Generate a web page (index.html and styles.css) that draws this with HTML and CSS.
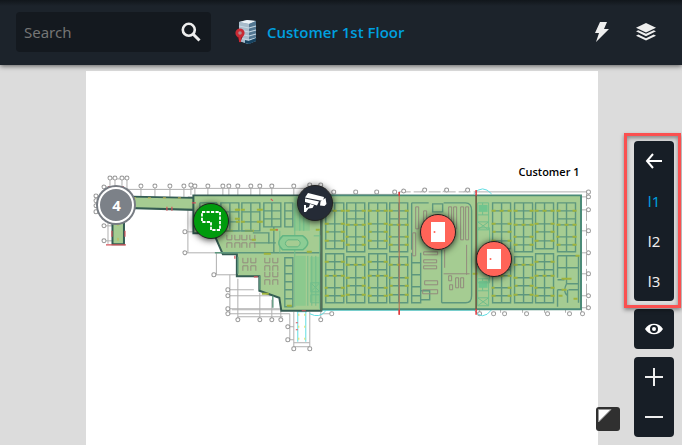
FILE: index.html
```html
<!DOCTYPE html>
<html lang="en">
<head>
<meta charset="utf-8">
<meta name="viewport" content="width=device-width, initial-scale=1">
<title>Customer 1st Floor</title>
<link rel="stylesheet" href="styles.css">
</head>
<body>
<header class="topbar">
  <form class="search" role="search">
    <input class="search-input" type="search" placeholder="Search" aria-label="Search">
    <button class="icon-button" type="button" aria-label="Run search">
      <svg width="20" height="20" viewBox="0 0 20 20" fill="none" stroke="#eee"><circle cx="7.800" cy="7.800" r="6" stroke-width="2.600"/><path d="M12 12l6.500 6.500" stroke-width="3"/></svg>
    </button>
  </form>
  <h1 class="title">
    <svg width="22" height="26" viewBox="0 0 22 26">
      <path d="M4 3l8-2 9 1v20l-8 3-9-3z" fill="#7794aa"/>
      <path d="M4 3l8-2 9 1-7 3z" fill="#edf3f7"/>
      <path d="M4 3l10 2v20l-10-3z" fill="#a9bccb"/>
      <path d="M14 5l7-3v20l-7 3z" fill="#527691"/>
      <path d="M4 7l10 2 7-2M4 11l10 2 7-2M4 15l10 2 7-2M4 19l10 2 7-2" fill="none" stroke="#c6d8e4" stroke-width="1.200"/>
      <path d="M10 21l4 1 7-3v3l-7 3-4-1z" fill="#16425f"/>
      <path d="M5 24l-3-7h6z" fill="#8e1620"/>
      <circle cx="5" cy="14" r="3.200" fill="#b08a8c" stroke="#c92a34" stroke-width="2.800"/>
      <path d="M5 17v6" stroke="#c92a34" stroke-width="2"/>
    </svg>
    <span>Customer 1st Floor</span>
  </h1>
  <nav class="actions" aria-label="Tools">
    <button class="icon-button" type="button" aria-label="Actions">
      <svg width="20" height="22" viewBox="0 0 20 22"><path d="M8 1h7l-3 7h5L4 21l3-9H3z" fill="#eee"/></svg>
    </button>
    <button class="icon-button" type="button" aria-label="Layers">
      <svg width="20" height="20" viewBox="0 0 20 20" fill="#eee"><path d="M10 1l10 4.700-10 4.800L0 5.700z"/><path d="M0 9.300l2.300-1.100 7.700 3.600 7.700-3.600L20 9.300l-10 4.900z"/><path d="M0 13.700l2.300-1.100 7.700 3.600 7.700-3.600 2.300 1.100-10 4.900z"/></svg>
    </button>
  </nav>
</header>

<main class="stage">
  <section class="sheet" aria-label="Floor plan">
    <svg class="plan" viewBox="86 71 512 374" fill="none">
      <defs>
        <g id="desks-a">
          <path class="desk" d="M0 0h18v46H0zM9 0v46M0 8h18M0 21h18M0 29h18M0 38h18"/>
          <path class="chair" d="M-1 8h4M15 8h4M7 8h4M-1 21h4M15 21h4M0 29h3M15 29h4M-1 38h4M15 38h4"/>
        </g>
        <g id="desks-b">
          <path class="desk" d="M0 0h18v49H0zM9 0v49M0 8h18M0 16h18M0 22h18M0 34h18M0 42h18"/>
          <path class="chair" d="M-1 8h4M15 8h4M-1 22h4M15 22h4M7 22h4M-1 34h3M15 34h4M-1 42h4M15 42h4"/>
        </g>
        <g id="room">
          <path class="desk" d="M0 0h18v28H0zM9 0v28M0 9h18M0 19h18"/>
          <path class="chair" d="M-1 7h4M15 7h4M-1 19h4M15 19h4M3 28h9"/>
        </g>
        <path id="seats" class="seat" d="M0 0v5h5V0M8 0v5h5V0M0 13v-5h5v5M8 13v-5h5v5"/>
        <g id="stair"><path class="core" d="M0 0h11v27H0zM0 12h11M0 19l11 8M11 19L0 27M0 19h11M5 0v12"/><path d="M1 2h9v7H1z" fill="#70c58e"/></g>
        <path id="axis-ends" d="M110 178h0M115 178h0M122 178h0M127 178h0M104 187h0M96 196h0M96 201h0M96 206h0M96 212h0M141 186h0M155 186h0M170 186h0M184 186h0M191 185h0M104 226h0M104 241h0M185 232h0M185 253h0M195 186h0M208 186h0M223 186h0M229 186h0M238 186h0M251 186h0M260 186h0M272 186h0M294 186h0M310 185h0M321 185h0M334 192h0M356 192h0M377 192h0M395 192h0M404 191h0M425 190h0M447 190h0M468 190h0M214 275h0M228 290h0M228 296h0M228 309h0M228 314h0M238 320h0M260 320h0M272 320h0M281 320h0M288 327h0M288 340h0M294 349h0M310 349h0M321 320h0M332 314h0M589 192h0M589 197h0M589 210h0M589 231h0M589 253h0M589 274h0M589 296h0M589 308h0M480 314h0M494 314h0M505 314h0M527 314h0M548 314h0M570 314h0M583 314h0"/>
      </defs>

      <path class="grid" d="M110 179h17M110 179v14M115 179v14M122 179v14M127 179v14M104 187h11M96 196h10M96 201h10M96 206h10M96 212h10M127 189.500h66M141 187v10M155 187v10M170 187v10M184 187v10M191 186v9M104 226h9M104 241h9M108 218v26M188 197v56M185 232h9M185 253h38M188 197h6"/>
      <path class="grid" d="M191 188.500h124M195 186v10M208 186v10M223 186v10M229 186v10M238 186v10M251 186v10M260 186v10M272 186v10M294 186v10M310 185v10M322 187v7M322 194.500h78M334 191v4M356 191v4M377 191v4M395 191v4"/>
      <path class="grid" d="M214 275h23M216.500 253v22M230 275v40M228 290h26M228 296h43M228 309h54M228 314h62M232 310h50M238 279v41M260 293v27M272 300v20M281 311v9M238 317h45M290 314v26M294 312v37M310 312v37M287 327h7M287 340h7M294 343h16M294 347h16M321 312v8M322 314h9"/>
      <path class="grid dashed" d="M399 192h80M587 194v116"/>
      <path class="grid" d="M479 192h109M582 197h7M582 210h7M582 231h7M582 253h7M582 274h7M582 296h7M582 308h7M421 192l3-2M443 192l3-2M464 192l3-2M480 309v4M501 309v4M523 309v4M545 309v4M566 309v4M582 309v4"/>
      <use class="nodes" href="#axis-ends"/>
      <use class="hole" href="#axis-ends"/>
      <path class="cyan" d="M298 312v30M306 312v30M297 312h10M310 314q10 5 16-3M474 194q9-10 18 0M474 310q9 12 18 0M321 310.500h154"/>
      <path d="M299 314v27M305 314v27" stroke="#e4e05c" stroke-dasharray="2 10"/>

      <path class="wing" d="M112.500 205v39.500h11.500V208z"/>
      <path class="wing" d="M120 196.500l74 1.500v12l-74-2z"/>
      <path class="hall" d="M321.500 195.500H581.500V309.500H321.500z"/>
      <path class="wing" d="M193.500 195.500h128V311h-40l-2-13-20-7v-14.500h-22.500v-22h-14l-7-16-6-5h-16.500z"/>

      <path class="glass" d="M294 197h16v34h-16zM296 256h10v50h-10zM310 257h10v45h-10z"/>
      <use href="#room" x="221" y="203"/><use href="#room" x="242" y="203"/>
      <path class="desk" d="M264 203h17v24h-17zM272 203v24M264 211h17M264 219h17M285 203h8v24h-8zM285 211h8M285 219h8M200 203h17M200 203v8M217 203v20M222 231h31M253 233h16v11M253 253h68M254 243h22M274 227v26M285 258h8v49h-8zM285 266h8M285 274h8M285 282h8M285 290h8M285 299h8M215 253h106M238 257v17M260 276v14M273 296v12"/>
      <path class="core" d="M295 203v104M300 203v28M304 203v28M308 256v50M312 256v50M316 256v50M320 231v78M311 283h9v9h-9zM311 283l9 9M320 283l-9 9M311 295h9v8h-9zM314 236h7v16M280 231v22"/>
      <path d="M283 236q-8 7 0 14h20q10-7 0-14z" fill="#8ccd94" stroke="#63b583" stroke-width="1.500"/>
      <path d="M288 240q-5 4 0 7h10q5-4 0-7z" fill="#a5cc92" stroke="#63b583"/>
      <use href="#seats" x="227" y="235"/><use href="#seats" x="242" y="235"/><use href="#seats" x="243" y="258"/><use href="#seats" x="265" y="258"/><use href="#seats" x="265" y="272"/>
      <path class="chair" d="M235 210h5M235 219h5M259 210h4M259 222h4M270 230h8M252 240h4M264 254h7M287 306h5M307 252h5M316 230h4M262 294h7M206 205h3"/>

      <use href="#desks-a" x="326" y="203"/><use href="#desks-b" x="326" y="254"/>
      <use href="#desks-b" x="347" y="203"/><use href="#desks-a" x="347" y="257"/>
      <use href="#desks-a" x="369" y="203"/><use href="#desks-b" x="369" y="254"/>
      <use href="#desks-b" x="390" y="203"/><use href="#desks-a" x="390" y="257"/>
      <path class="desk" d="M412 203h17M412 203v47M412 253v50h9V253M412 263h9M412 275h9M412 287h9M412 296h9M433 204h10v8h-10zM421 291h9v9h-9zM442 250v53M444 203h22q6 0 6 8v85q0 7-6 7h-24"/>
      <path class="seat" d="M416 207v22h3v-22zM424 211v25h3v-25zM449 207v13h3v-13zM454 207v22h3v-22zM461 207v33h3v-33zM466 207v33h3v-33zM413 233h3v23h-3zM445 250v18M424 252h14v3h-14zM424 260h13v3h-13zM424 266h13v3h-13zM425 281h13v4h-13zM423 290h15v4h-15zM444 274h26M449 276h3v5h-3zM456 278h3v10h-3zM461 278h3v10h-3zM450 285h3v5h-3zM467 245v30"/>
      <use href="#stair" x="478" y="203"/><use href="#stair" x="478" y="279"/>
      <path class="core" d="M478 228h12v55h-12z"/>
      <use href="#desks-a" x="493" y="203"/><use href="#desks-b" x="493" y="254"/>
      <use href="#desks-b" x="515" y="203"/><use href="#desks-a" x="515" y="257"/>
      <use href="#desks-a" x="536" y="203"/><use href="#desks-b" x="536" y="254"/>
      <use href="#desks-b" x="558" y="203"/>
      <path class="desk" d="M558 256h21v47M558 256v22M558 268h21M567 256v28M558 280h7M558 290h6M567 284h12M569 290h10M558 290v17M568 290v13M567 284q-4 8 1 12"/>
      <path class="chair" d="M562 279h10M562 290h5M559 296h4M576 256h4M574 299h4M473 274h5"/>
      <path d="M118 198h72M118 208v34" stroke="#c9b84c" stroke-dasharray="3 12"/>
      <path d="M108 187h16M106 245h20M112 231v6M125 231v6M167 207v4M172 207v4M192 203h4M235 256v3M254 277h4M296 323h2M296 330h2M271 199l2 2M276 230h2M302 311h4" stroke="#d4535a" stroke-width="1.200"/>
      <path d="M399.500 192v123" stroke="#b86a50"/><path d="M399.500 192v4M399.500 310v5M476.500 190v6M476.500 309v6" stroke="#e4343c" stroke-width="1.500"/>
      <path d="M476.500 196v113" stroke="#66503c" stroke-width="1.500"/>
      <path d="M321.500 196v115" stroke="#55705a" stroke-width="2"/>
      <text class="plan-label" x="519" y="176">Customer 1</text>
    </svg>
    <button class="marker cluster" type="button" aria-label="4 items">4</button>
    <button class="marker zone" type="button" aria-label="Zone">
      <svg width="22" height="22" viewBox="0 0 22 22" fill="none" stroke="#fff" stroke-width="1.800"><path d="M2 2h18v18h-9v-8H2z" stroke-dasharray="3.200 1.300"/></svg>
    </button>
    <button class="marker camera" type="button" aria-label="Camera">
      <svg width="26" height="24" viewBox="0 0 26 24" fill="#fff"><path d="M6 2l16 4-1 4L3 6.500z"/><path d="M3 7.500l14 3-2 4L3 11z"/><path d="M18.500 10.500l5-3.500 1 6-2 2-4.500-.500z"/><path d="M8 13l4 1.200-1.500 2.800-4 .500-2.500 3.500H2v-7h2v3l3-1z"/></svg>
    </button>
    <button class="marker door door-west" type="button" aria-label="Door, west">
      <svg width="14" height="20" viewBox="0 0 14 20"><path d="M0 0h14v20H0z" fill="#fff"/><circle cx="3.500" cy="10" r="1" fill="#ff6458"/></svg>
    </button>
    <button class="marker door door-east" type="button" aria-label="Door, east">
      <svg width="14" height="20" viewBox="0 0 14 20"><path d="M0 0h14v20H0z" fill="#fff"/><circle cx="3.500" cy="10" r="1" fill="#ff6458"/></svg>
    </button>
  </section>

  <aside class="controls" aria-label="Map controls">
    <button class="contrast" type="button" aria-label="Overview map">
      <svg width="24" height="24" viewBox="0 0 24 24"><path d="M2.500 15V2.500H15z" fill="#fff" stroke="#999"/></svg>
    </button>
    <div class="stack">
      <div class="panel levels">
        <button class="tool" type="button" aria-label="Back">
          <svg width="18" height="16" viewBox="0 0 18 16" fill="none" stroke="#fff" stroke-width="2"><path d="M17 8H2M8 1L2 8l6 7"/></svg>
        </button>
        <button class="tool current" type="button">l1</button>
        <button class="tool" type="button">l2</button>
        <button class="tool" type="button">l3</button>
      </div>
      <div class="panel">
        <button class="tool" type="button" aria-label="Visibility">
          <svg width="18" height="12" viewBox="0 0 18 12"><path d="M0 6C4-1 14-1 18 6 14 13 4 13 0 6z" fill="#fff"/><circle cx="9" cy="6" r="3" fill="#fff" stroke="#171e26" stroke-width="2"/></svg>
        </button>
      </div>
      <div class="panel">
        <button class="tool" type="button" aria-label="Zoom in">
          <svg width="18" height="18" viewBox="0 0 18 18" stroke="#eee" stroke-width="2"><path d="M0 9h18M9 0v18"/></svg>
        </button>
        <button class="tool" type="button" aria-label="Zoom out">
          <svg width="18" height="18" viewBox="0 0 18 18" stroke="#eee" stroke-width="2"><path d="M0 9h18"/></svg>
        </button>
      </div>
    </div>
  </aside>
</main>
</body>
</html>
```
FILE: styles.css
```css
* {
  box-sizing: border-box;
}

body {
  margin: 0;
  min-height: 100vh;
  display: flex;
  flex-direction: column;
  font: 15px/20px "Noto Sans", "Open Sans", sans-serif;
  color: #eee;
  background: #dcdcdc;
}

button {
  padding: 0;
  border: 0;
  font: inherit;
  color: inherit;
  background: none;
  display: grid;
  place-items: center;
  cursor: pointer;
}

.topbar {
  display: flex;
  align-items: center;
  padding: 12px 16px 13px;
  background: linear-gradient(#11161b, #1c232b 6px);
  box-shadow: 0 1px 5px rgba(0, 0, 0, 0.6);
  position: relative;
  z-index: 1;
}

.search {
  display: flex;
  align-items: center;
  flex: 0 1 195px;
  min-width: 0;
  height: 40px;
  padding: 0 10px 0 8px;
  border-radius: 4px;
  background: #14191f;
}

.search-input {
  flex: 1;
  width: 0;
  min-width: 0;
  padding: 0;
  border: 0;
  outline: 0;
  font: inherit;
  color: #eee;
  background: none;
}

.search-input::placeholder {
  color: #757575;
}

.title {
  display: flex;
  align-items: center;
  gap: 10px;
  flex: 1;
  margin: 0 0 0 24px;
  font: 600 15px/20px "Open Sans", "Noto Sans", sans-serif;
  color: #009fdf;
}

.actions {
  display: flex;
  gap: 24px;
  padding-right: 10px;
}

.stage {
  flex: 1;
  display: grid;
  overflow: hidden;
}

.sheet,
.controls {
  grid-area: 1 / 1;
}

.sheet {
  position: relative;
  width: 75%;
  margin: 6px auto 0;
  left: 1px;
  background: #fff;
}

.plan {
  display: block;
  width: 100%;
}

.grid {
  stroke: #b0b0b0;
}

.dashed {
  stroke-dasharray: 12 3;
}

.nodes {
  stroke: #999;
  stroke-width: 5;
  stroke-linecap: round;
}

.hole {
  stroke: #fff;
  stroke-width: 3;
  stroke-linecap: round;
}

.cyan {
  stroke: #5fdde2;
}

.wing,
.hall {
  fill: #a5cc92;
  stroke: #345c53;
  stroke-width: 2;
}

.hall {
  stroke: #4b8b78;
}

.desk {
  stroke: #5d977e;
  stroke-width: 1.4;
}

.chair {
  stroke: #9fb33c;
  stroke-width: 2;
}

.seat {
  stroke: #938b7c;
}

.core {
  stroke: #70be8c;
}

.glass {
  fill: #8cc98e;
}

.plan-label {
  fill: #000;
  font: 600 11px "Open Sans", "Noto Sans", sans-serif;
}

.marker {
  position: absolute;
  width: 36px;
  height: 36px;
  border: 1px solid #222;
  border-radius: 50%;
  transform: translate(-50%, -50%);
  box-shadow: 0 1px 7px rgba(0, 0, 0, 0.8);
}

.cluster {
  left: 5.9%;
  top: 35.8%;
  border: 2px solid #fff;
  font-weight: 700;
  color: #fff;
  background: #7c8188;
  box-shadow: 0 0 0 2px #777c83;
}

.zone {
  left: 24.4%;
  top: 40.1%;
  background: #009b0d;
}

.camera {
  left: 44.7%;
  top: 35.3%;
  background: #252b36;
}

.door {
  background: #ff6458;
}

.door-west {
  left: 68.8%;
  top: 43%;
}

.door-east {
  left: 79.7%;
  top: 50.3%;
}

.controls {
  z-index: 1;
  place-self: end;
  display: flex;
  align-items: flex-end;
  gap: 14px;
  padding: 8px;
}

.contrast {
  width: 24px;
  height: 24px;
  margin-bottom: 6px;
  border-radius: 3px;
  background: #303030;
}

.stack {
  display: grid;
  gap: 8px;
}

.panel {
  border-radius: 4px;
  background: #171e26;
}

.tool {
  width: 40px;
  height: 40px;
}

.current {
  color: #009fdf;
}

.levels {
  position: relative;
}

.levels::after {
  content: "";
  position: absolute;
  inset: -8px -7px -7px -10px;
  border: 3px solid #fa5050;
  box-shadow: 0 2px 4px rgba(0, 0, 0, 0.4), inset 0 2px 4px rgba(0, 0, 0, 0.4);
  pointer-events: none;
}
```
